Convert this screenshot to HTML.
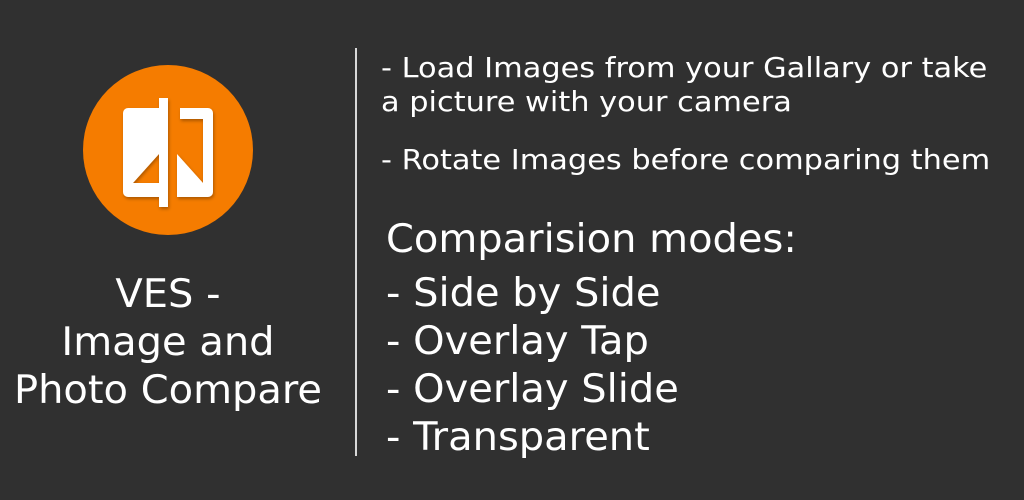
<!DOCTYPE html>
<html><head><meta charset="utf-8"><style>
html,body{margin:0;padding:0;}
body{width:1024px;height:500px;background:#303030;position:relative;overflow:hidden;font-family:"DejaVu Sans","Liberation Sans",sans-serif;color:#fff;}
.t{position:absolute;white-space:nowrap;line-height:1;transform-origin:0 0;}
.s{font-size:28px;left:381px;transform:scaleX(1.085);}
.b{font-size:39px;left:386px;transform:scaleX(1.025);}
.l{font-size:39px;width:336px;left:0;text-align:center;transform:scaleX(1.025);transform-origin:168px 0;}
</style></head><body>
<svg style="position:absolute;left:0;top:0" width="400" height="500">
<defs><filter id="sh" x="-20%" y="-20%" width="140%" height="140%"><feDropShadow dx="1" dy="2" stdDeviation="1.5" flood-color="#000" flood-opacity="0.3"/></filter></defs>
<circle cx="168" cy="150" r="85" fill="#f57c00"/>
<g filter="url(#sh)" fill="#fff">
<path d="M128 108 H159 V197 H128 a5 5 0 0 1 -5 -5 V113 a5 5 0 0 1 5 -5 Z M133 183 L159 154 V183 Z" fill-rule="evenodd"/>
<rect x="159" y="98" width="9" height="109"/>
<path d="M180 108 H208 a5 5 0 0 1 5 5 V192 a5 5 0 0 1 -5 5 H177 V183 H203 V119 H180 Z"/>
<path d="M177 154 L203 183 H177 Z"/>
</g>
<rect x="355" y="48" width="2" height="408" fill="#d8d8d8"/>
</svg>
<div class="t s" style="top:54px">- Load Images from your Gallary or take</div>
<div class="t s" style="top:88px">a picture with your camera</div>
<div class="t s" style="top:146px">- Rotate Images before comparing them</div>
<div class="t b" style="top:220px">Comparision modes:</div>
<div class="t b" style="top:274px">- Side by Side</div>
<div class="t b" style="top:322px">- Overlay Tap</div>
<div class="t b" style="top:370px">- Overlay Slide</div>
<div class="t b" style="top:418px">- Transparent</div>
<div class="t l" style="top:275px">VES -</div>
<div class="t l" style="top:323px">Image and</div>
<div class="t l" style="top:371px">Photo Compare</div>
</body></html>
